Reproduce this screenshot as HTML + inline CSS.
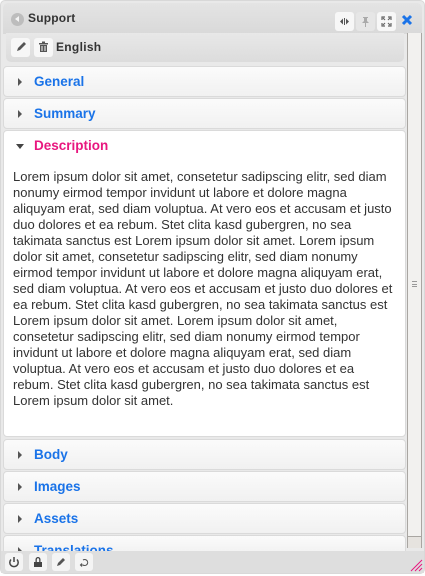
<!DOCTYPE html>
<html><head><meta charset="utf-8"><style>
*{box-sizing:border-box;margin:0;padding:0}
body{width:425px;height:574px;overflow:hidden;background:#fff;font-family:"Liberation Sans",Arial,sans-serif;position:relative}
.outer{position:absolute;left:0;top:0;width:425px;height:574px;border:1px solid #d8d8d8;border-radius:5px;background:#e9e9e9}
.title{position:absolute;left:3px;top:3px;width:419px;height:31px;background:linear-gradient(#e4e4e4,#d9d9d9);border-radius:5px 5px 0 0}
.title .t{position:absolute;left:25px;top:8px;font-size:12px;font-weight:bold;color:#333;letter-spacing:0.2px}
.back{position:absolute;left:8px;top:10px;width:13px;height:13px;border-radius:50%;background:#bdbdbd}
.back:after{content:"";position:absolute;left:4px;top:3px;border-right:4px solid #f4f4f4;border-top:3.5px solid transparent;border-bottom:3.5px solid transparent}
.tb{position:absolute;top:9px;width:19px;height:19px;border-radius:3px;background:#f7f7f7}
.sub{position:absolute;left:6px;top:33px;width:398px;height:29px;background:linear-gradient(#e8e8e8,#dcdcdc);border-radius:0 0 5px 5px}
.sb{position:absolute;top:5px;width:19px;height:19px;border-radius:3px;background:#f7f7f7}
.sub .t{position:absolute;left:50px;top:7px;font-size:12px;font-weight:bold;color:#333;letter-spacing:0.3px}
.scroll{position:absolute;left:407px;top:33px;width:15px;height:515px;background:#e6e3df;border-left:1px solid #a9a6a2;border-right:1px solid #a9a6a2}
.thumb{position:absolute;left:0;top:0;width:13px;height:504px;background:#f2f1ef;border-bottom:1px solid #a9a6a2}
.sec{position:absolute;left:3px;width:403px;height:31px;border:1px solid #dadada;border-radius:4px;background:linear-gradient(#fbfbfb,#f1f1f1)}
.sec .t{position:absolute;left:30px;top:7px;font-size:13.5px;font-weight:bold;color:#1a73e8}
.sec .a{position:absolute;left:14px;top:11px;border-left:4px solid #555;border-top:4px solid transparent;border-bottom:4px solid transparent}
.desc{background:#fff}
.desc .t{color:#e8177f}
.desc .a{left:12px;top:13px;border-top:5px solid #444;border-left:4px solid transparent;border-right:4px solid transparent;border-bottom:0}
.txt{position:absolute;left:9px;top:38px;font-size:13px;line-height:16px;color:#333;white-space:nowrap}
.foot{position:absolute;left:1px;top:551px;width:423px;height:22px;background:#dedede}
.fb{position:absolute;top:2px;width:18px;height:18px;border-radius:3px;background:#f4f4f4}
</style></head><body>
<div class="outer"></div>
<div class="title"><div class="back"></div><div class="t">Support</div>
<div class="tb" style="left:332px"><svg width="19" height="19"><path d="M8 6.5L5 9.5L8 12.5ZM11 6.5L14 9.5L11 12.5Z" fill="#555"/><rect x="9" y="6" width="1" height="7" fill="#555"/></svg></div>
<div class="tb" style="left:353px;background:#e6e6e6"><svg width="19" height="19"><path d="M7 5h5v1h-1v3l2 2H6l2-2V6H7z M9 11h1v4H9z" fill="#aaa"/></svg></div>
<div class="tb" style="left:374px"><svg width="19" height="19" stroke="#666" stroke-width="1.2" fill="none"><path d="M5 8V5h3M11 5h3v3M14 11v3h-3M8 14H5v-3M6 6l2 2M13 6l-2 2M13 13l-2-2M6 13l2-2"/></svg></div>
<svg style="position:absolute;left:397px;top:10px" width="14" height="14"><path d="M3 3L11 11M11 3L3 11" stroke="#1a73e8" stroke-width="3"/></svg>
</div>
<div class="sub">
<div class="sb" style="left:5px"><svg width="19" height="19"><path d="M6 13l1-3 6-6 2 2-6 6z" fill="#555"/></svg></div>
<div class="sb" style="left:28px"><svg width="19" height="19" fill="#555"><rect x="5" y="5" width="9" height="1.5"/><rect x="8" y="3.5" width="3" height="1.5"/><path d="M6 7h7v7H6z M7.5 8v5h1V8z M10.5 8v5h1V8z" fill-rule="evenodd"/></svg></div>
<div class="t">English</div></div>
<div class="scroll"><div class="thumb"><div style="position:absolute;left:4px;top:248px;width:5px;height:6px;border-top:1px solid #999;border-bottom:1px solid #999"></div><div style="position:absolute;left:4px;top:251px;width:5px;height:1px;background:#999"></div></div></div>
<div class="sec" style="top:66px"><div class="a"></div><div class="t">General</div></div>
<div class="sec" style="top:98px"><div class="a"></div><div class="t">Summary</div></div>
<div class="sec desc" style="top:130px;height:307px"><div class="a"></div><div class="t">Description</div>
<div class="txt">Lorem ipsum dolor sit amet, consetetur sadipscing elitr, sed diam<br>nonumy eirmod tempor invidunt ut labore et dolore magna<br>aliquyam erat, sed diam voluptua. At vero eos et accusam et justo<br>duo dolores et ea rebum. Stet clita kasd gubergren, no sea<br>takimata sanctus est Lorem ipsum dolor sit amet. Lorem ipsum<br>dolor sit amet, consetetur sadipscing elitr, sed diam nonumy<br>eirmod tempor invidunt ut labore et dolore magna aliquyam erat,<br>sed diam voluptua. At vero eos et accusam et justo duo dolores et<br>ea rebum. Stet clita kasd gubergren, no sea takimata sanctus est<br>Lorem ipsum dolor sit amet. Lorem ipsum dolor sit amet,<br>consetetur sadipscing elitr, sed diam nonumy eirmod tempor<br>invidunt ut labore et dolore magna aliquyam erat, sed diam<br>voluptua. At vero eos et accusam et justo duo dolores et ea<br>rebum. Stet clita kasd gubergren, no sea takimata sanctus est<br>Lorem ipsum dolor sit amet.</div></div>
<div class="sec" style="top:439px"><div class="a"></div><div class="t">Body</div></div>
<div class="sec" style="top:471px"><div class="a"></div><div class="t">Images</div></div>
<div class="sec" style="top:503px"><div class="a"></div><div class="t">Assets</div></div>
<div class="sec" style="top:535px;height:20px;overflow:hidden"><div class="a"></div><div class="t">Translations</div></div>
<div class="foot">
<div class="fb" style="left:4px"><svg width="18" height="18" fill="none" stroke="#444" stroke-width="1.5"><path d="M6 6.5A4.2 4.2 0 1 0 12 6.5M9 4v5"/></svg></div>
<div class="fb" style="left:28px"><svg width="18" height="18" fill="#444"><path d="M5 9h8v5H5z M6.5 9V6.5a2.5 2.5 0 0 1 5 0V9h-1.3V6.5a1.2 1.2 0 0 0-2.4 0V9z"/></svg></div>
<div class="fb" style="left:51px"><svg width="18" height="18"><path d="M5 13l1-3 5-5 2 2-5 5z" fill="#555"/></svg></div>
<div class="fb" style="left:74px"><svg width="18" height="18" fill="none" stroke="#555" stroke-width="1.1"><path d="M8 7A3 3 0 1 1 8 12H6M7 10.5L5.5 12 7 13.5"/></svg></div>
<svg style="position:absolute;left:408px;top:7px" width="14" height="14" stroke="#e8177f" stroke-width="1"><path d="M2 13L13 2M6 13L13 6M10 13L13 10"/></svg>
</div>
</body></html>
